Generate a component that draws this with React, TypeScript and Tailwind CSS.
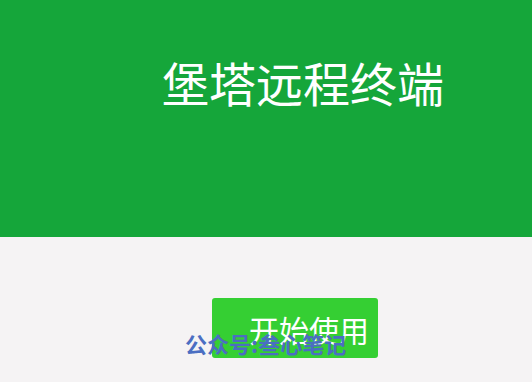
export default function App() {
  return (
    <div
      className="relative h-[382px] w-[532px] overflow-hidden bg-[#f5f3f4]"
      style={{ fontFamily: '"Noto Sans CJK SC", "Noto Sans", sans-serif' }}
    >
      <div className="h-[237px] bg-[#15a63a] pl-[162px] pt-[52px]">
        <h1 className="text-[47px] leading-[60px] font-normal text-white">堡塔远程终端</h1>
      </div>
      <div className="pl-[212px] pt-[61px]">
        <button className="flex h-[60px] w-[166px] items-center justify-center rounded-[3px] bg-[#35cf33] pl-[28px] pt-[2px] text-[30px] leading-none text-white">
          开始使用
        </button>
      </div>
      <div className="absolute left-[185px] top-[328px] text-[22px] leading-[30px] font-bold text-[#4b6ec2]">
        公众号:叁心笔记
      </div>
    </div>
  );
}
